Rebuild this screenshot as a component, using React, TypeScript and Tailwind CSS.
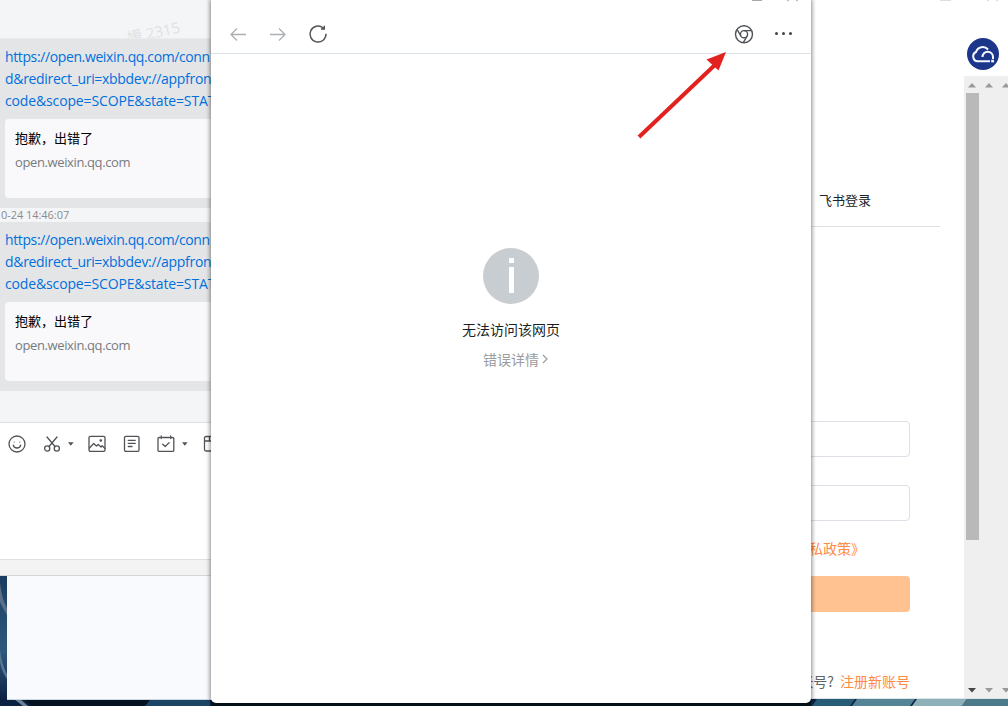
import type { ReactNode } from 'react';

const latin = "font-['Open_Sans','Noto_Sans_CJK_SC',sans-serif]";
const cjk = "font-['Noto_Sans_CJK_SC',sans-serif]";

function Icon({ children }: { children: ReactNode }) {
  return (
    <svg width="20" height="20" viewBox="0 0 20 20" fill="none" stroke="#505357" strokeWidth="1.3" strokeLinecap="round" strokeLinejoin="round" className="shrink-0">
      {children}
    </svg>
  );
}

function Caret() {
  return (
    <svg width="6" height="4" viewBox="0 0 6 4" className="shrink-0">
      <path d="M0 .3H5.6L2.8 3.8Z" fill="#505357" />
    </svg>
  );
}

function Message() {
  return (
    <div className="h-[169px] shrink-0 bg-[#e4e5e7] pl-[5px] pt-[7px]">
      <div className={`h-[73px] whitespace-nowrap text-[14px] leading-[22px] text-[#0070dc] ${latin}`}>
        <div className="tracking-[-0.38px]">https://open.weixin.qq.com/conn</div>
        <div className="tracking-[-0.31px]">d&amp;redirect_uri=xbbdev://appfron</div>
        <div className="tracking-[-0.14px]">code&amp;scope=SCOPE&amp;state=STAT</div>
      </div>
      <div className="h-[79px] rounded-l bg-[#f9f9fb] pl-2.5 pt-[9px]">
        <div className={`text-[13px] leading-[20px] text-black ${cjk}`}>抱歉，出错了</div>
        <div className={`mt-1 text-[13px] leading-[20px] tracking-[-0.38px] text-[#777b80] ${latin}`}>open.weixin.qq.com</div>
      </div>
    </div>
  );
}

function Wallpaper() {
  return (
    <svg width="1008" height="706" viewBox="0 0 1008 706" className="absolute left-0 top-0">
      <defs>
        <linearGradient id="sea" x1="0" y1="0" x2="0" y2="1">
          <stop offset="0" stopColor="#173b5f" />
          <stop offset=".6" stopColor="#31597c" />
          <stop offset="1" stopColor="#08183d" />
        </linearGradient>
      </defs>
      <path fill="url(#sea)" d="M0 570H10V706H0Z" />
      <path fill="#5c6f86" d="M0 583Q2 600 7 608V615Q2 607 0 602Z" />
      <path fill="#567790" d="M0 650Q2 665 7 674V679Q2 672 0 662Z" />
      <path fill="#0b2142" d="M0 699H1008V706H0Z" />
      <path fill="#6c8292" d="M20 699L28 706H23L14 699Z" />
      <path fill="#04131f" d="M25 700H150L145 706H31Z" />
      <path fill="#1c4464" d="M150 700H210V706H145Z" />
      <path fill="#03151c" d="M211 700H811V706H211Z" />
      <path fill="#265d75" d="M817 699H855L850 706H812Z" />
      <path fill="#548596" d="M857 699H915L910 706H852Z" />
      <path fill="#8db0b9" d="M917 699H967L962 706H912Z" />
      <path fill="#4c7a89" d="M967 699H1008V706H962Z" />
    </svg>
  );
}

function ChatWindow() {
  return (
    <div className="absolute left-0 top-0 flex h-[576px] w-[214px] flex-col overflow-hidden border-b border-[#d5d6d9] bg-[#f4f5f7]">
      <div className="relative h-[39px] shrink-0 overflow-hidden border-b border-[#eaebed]">
        <span className={`absolute left-[127px] top-[23px] -rotate-12 whitespace-nowrap text-[15px] leading-[18px] text-[#e0e1e4] ${latin}`}>媛 2315</span>
      </div>
      <Message />
      <div className={`h-3.5 shrink-0 pl-px text-[11px] leading-[14px] tracking-[-0.05px] text-[#888b90] ${latin}`}>0-24 14:46:07</div>
      <Message />
      <div className="h-[31px] shrink-0" />
      <div className="h-[137px] shrink-0 border-t border-[#dedfe1] bg-white">
        <div className="flex h-[42px] items-center pl-[7px]">
          <Icon>
            <circle cx="10" cy="10" r="8" />
            <circle cx="7.2" cy="8" r=".6" fill="#505357" stroke="none" />
            <circle cx="12.8" cy="8" r=".6" fill="#505357" stroke="none" />
            <path d="M6.3 11.2Q6.8 14 10 14T13.7 11.2" />
          </Icon>
          <div className="w-[15px] shrink-0" />
          <Icon>
            <path d="M5 3L13 12.5M15 3L7 12.5" />
            <circle cx="5.2" cy="14.5" r="2.6" />
            <circle cx="14.8" cy="14.5" r="2.6" />
          </Icon>
          <div className="w-1.5 shrink-0" />
          <Caret />
          <div className="w-[13px] shrink-0" />
          <Icon>
            <rect x="2" y="2.3" width="16" height="15" rx="1.3" />
            <path d="M2.5 14L6.7 9.5L9.4 12L11.2 10.4L14 13L15.2 11.8L18 14.4" />
            <circle cx="13.8" cy="6.5" r=".7" fill="#505357" />
          </Icon>
          <div className="w-[15px] shrink-0" />
          <Icon>
            <rect x="2.5" y="2.3" width="14.5" height="15" rx="1.3" />
            <path d="M6.3 6.4H13.2M6.3 9.4H13.2M6.3 12.5H10" />
          </Icon>
          <div className="w-[14px] shrink-0" />
          <Icon>
            <path d="M6.5 3.5H13.5M4 3.5H3.3Q2 3.5 2 4.8V16.2Q2 17.4 3.3 17.4H16.5Q17.8 17.4 17.8 16.2V4.8Q17.8 3.5 16.5 3.5H15.8M5.2 2V4.5M14.7 2V4.5M6.7 10.2L9.2 12.5L13.2 8.6" />
          </Icon>
          <div className="w-1.5 shrink-0" />
          <Caret />
          <div className="w-[14px] shrink-0" />
          <Icon>
            <path d="M17 2.5H4Q2.5 2.5 2.5 4V15.5Q2.5 17 4 17H17M3 7H17M7.5 3V7" />
          </Icon>
        </div>
      </div>
      <div className="h-[17px] shrink-0 border-t border-[#dedfe0] bg-[#f3f3f4]" />
    </div>
  );
}

function ScrollArrows({ down = false }: { down?: boolean }) {
  return (
    <svg width="44" height="5" viewBox="0 0 44 5" className="block">
      {[4, 21, 38].map((x, i) => (
        <path key={x} d={down ? `M${x} 0H${x + 8}L${x + 4} 4.5Z` : `M${x} 4.5H${x + 8}L${x + 4} 0Z`} fill={down && i === 0 ? '#454545' : '#999'} />
      ))}
    </svg>
  );
}

function LoginWindow() {
  return (
    <div className="absolute left-[805px] top-0 flex h-[699px] w-[203px] overflow-hidden border-b border-[#dce4e7] bg-white">
      <div className={`flex w-[159px] shrink-0 flex-col whitespace-nowrap text-[14px] ${cjk}`}>
        <div className="mt-[186px] h-[41px] w-[135px] border-b border-[#dedfe2] pl-3.5 text-[13px] leading-7 text-[#222]">飞书登录</div>
        <div className="mt-[194px] h-9 w-[105px] shrink-0 rounded-r border border-[#dcdfe6]" />
        <div className="mt-7 h-9 w-[105px] shrink-0 rounded-r border border-[#dcdfe6]" />
        <div className="mt-[17px] h-5 w-[105px] pl-[4px] leading-5 text-[#ff8a45]">私政策》</div>
        <div className="mt-[18px] h-9 w-[105px] shrink-0 rounded-r bg-[#ffc290]" />
        <div className="mt-[59px] flex h-5 w-[105px] justify-end leading-5">
          <span className="text-[#606266]">账号?</span>
          <span className="ml-1.5 text-[#ff8a45]">注册新账号</span>
        </div>
      </div>
      <div className="flex w-11 flex-col">
        <div className="relative h-[76px] shrink-0">
          <svg width="44" height="76" viewBox="0 0 44 76">
            <circle cx="19" cy="54" r="16" fill="#1c3789" />
            <path d="M26 61.3H13.6A4.9 4.9 0 0 1 12 52A7 7 0 0 1 24 49.5M18.5 57A4.8 4.8 0 0 1 29 56.8V59" fill="none" stroke="#f5f8ff" strokeWidth="2" />
            <path d="M27.2 59.8H30V62.4H27.2Z" fill="#f5f8ff" />
          </svg>
        </div>
        <div className="flex h-[622px] flex-col bg-[#efefef] pt-[7px]">
          <ScrollArrows />
          <div className="ml-0.5 mt-[5px] h-[447px] w-[13px] bg-[#b9b9b9]" />
          <div className="mt-[148px]"><ScrollArrows down /></div>
        </div>
      </div>
      <div className="absolute left-[135px] top-0 h-px w-[11px] bg-[#dedede]" />
      <svg width="12" height="2" className="absolute left-[182px] top-0"><path d="M0 1L2 0M9 0L11 1" stroke="#d5d5d5" /></svg>
    </div>
  );
}

function BrowserWindow() {
  return (
    <div className="absolute left-[211px] top-0 h-[703px] w-[600px] rounded-b-[5px] bg-white shadow-[0_0_4px_1px_#00000075]">
      <header className="flex h-[54px] items-center border-b border-[#dbe2ea] pl-[18px] pr-[18px] pt-[14px]">
        <svg width="100" height="20" viewBox="0 0 100 20" fill="none" stroke="#adb0b3" strokeWidth="1.3" className="shrink-0">
          <path d="M17 10.5H2M8 4.5L2 10.5L8 16.5M41 10.5H56M50 4.5L56 10.5L50 16.5" />
          <path d="M97 9.8A8 8 0 1 1 94 3.8L95 4.8M95.3 1.7V5H92" stroke="#505357" strokeWidth="1.4" />
        </svg>
        <div className="grow" />
        <svg width="60" height="20" viewBox="0 0 60 20" fill="none" stroke="#505357" strokeWidth="1.4">
          <g transform="translate(1 .2)">
            <circle cx="10" cy="10" r="8.5" />
            <circle cx="10" cy="10" r="3.6" />
            <path d="M10 6.4H17.7M6.9 11.8L3 5.2M13.1 11.8L9.3 18.4" />
          </g>
          <g fill="#404347" stroke="none">
            <circle cx="43.5" cy="9.6" r="1.5" />
            <circle cx="50.5" cy="9.6" r="1.5" />
            <circle cx="57.5" cy="9.6" r="1.5" />
          </g>
        </svg>
      </header>
      <main className={`flex flex-col items-center pt-[194px] ${cjk}`}>
        <svg width="56" height="56" viewBox="0 0 56 56">
          <circle cx="28" cy="28" r="28" fill="#c8cdd2" />
          <path d="M26 10H31V15H26ZM26 19H31V45H26Z" fill="white" />
        </svg>
        <div className="mt-[15px] text-[14px] leading-5 text-[#1c1f23]">无法访问该网页</div>
        <div className="ml-2.5 mt-2.5 flex items-center gap-0.5 text-[14px] leading-5 text-[#9a9c9e]">
          <span>错误详情</span>
          <svg width="8" height="10" viewBox="0 0 8 10" fill="none" stroke="currentColor" strokeWidth="1.2"><path d="M2 1L6 5L2 9" /></svg>
        </div>
      </main>
      <div className="absolute left-[541px] top-0 h-px w-[10px] bg-[#aaa]" />
      <svg width="14" height="2" className="absolute left-[576px] top-0"><path d="M0 1L2 0M9 0L11 1" stroke="#aaa" /></svg>
      <svg width="100" height="100" viewBox="0 0 100 100" className="absolute left-[420px] top-[45px]">
        <path d="M8 92L87 17" stroke="#e3211e" strokeWidth="4" />
        <path d="M95 7L75.5 14.5L87.5 25.5Z" fill="#e3211e" />
      </svg>
    </div>
  );
}

export default function App() {
  return (
    <div className="relative h-[706px] w-[1008px] overflow-hidden bg-[#071e31]">
      <Wallpaper />
      <div className="absolute left-[7px] top-[570px] h-[130px] w-[210px] border-b border-[#cbd7e0] bg-[#f9fafd]" />
      <ChatWindow />
      <LoginWindow />
      <BrowserWindow />
    </div>
  );
}
